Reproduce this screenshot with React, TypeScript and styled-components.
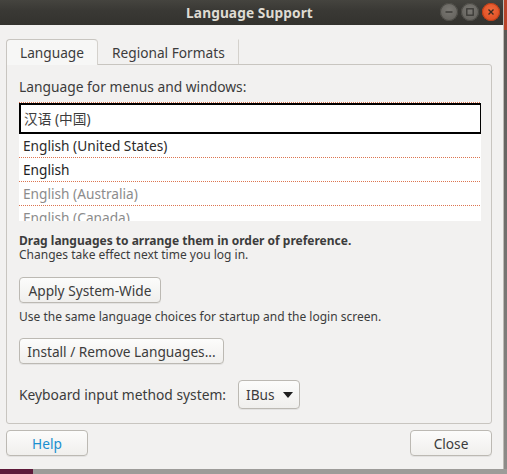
import styled, { createGlobalStyle } from "styled-components";

const GlobalStyle = createGlobalStyle`
  html, body {
    margin: 0;
    padding: 0;
    background: #9c9b98;
  }
  * {
    box-sizing: border-box;
  }
`;

const dots = "repeating-linear-gradient(to right, #dc7550 0 1px, transparent 1px 2px)";

const Desktop = styled.div`
  width: 507px;
  height: 474px;
  display: grid;
  grid-template-columns: 504px 3px;
  grid-template-rows: 469px 5px;
  font-family: "Noto Sans", "Noto Sans CJK SC", sans-serif;
  overflow: hidden;
`;

const EdgeRight = styled.div`
  background: linear-gradient(to bottom, #b8432a 0, #b8432a 30px, #5a5855 30px, #8d8c89 100%);
`;

const EdgeBottom = styled.div`
  grid-column: 1 / span 2;
  display: flex;
`;

const Wallpaper = styled.div<{ $tone: string; $w?: number }>`
  background: ${(p) => p.$tone};
  ${(p) => (p.$w ? `width: ${p.$w}px;` : "flex: 1;")}
`;

const Window = styled.div`
  display: flex;
  flex-direction: column;
  background: #f2f1f0;
  border-right: 1px solid #bdbab5;
`;

const TitleBar = styled.div`
  height: 25px;
  flex: none;
  background: linear-gradient(to bottom, #45443f, #3a3935 40%, #33322e);
  display: flex;
  align-items: center;
  justify-content: center;
  position: relative;
`;

const Title = styled.div`
  color: #dfdbd2;
  font-weight: bold;
  font-size: 13.7px;
  letter-spacing: 0.1px;
  margin-left: -4px;
`;

const Controls = styled.div`
  position: absolute;
  right: 3px;
  top: 3px;
  display: flex;
  gap: 3px;
`;

const Ctl = styled.div<{ $close?: boolean }>`
  width: 18px;
  height: 18px;
  border-radius: 50%;
  display: flex;
  align-items: center;
  justify-content: center;
  background: ${(p) =>
    p.$close
      ? "radial-gradient(circle at 50% 40%, #f16a3c, #d8461c)"
      : "radial-gradient(circle at 50% 40%, #7a7873, #5d5b56)"};
  box-shadow: inset 0 0 0 1px ${(p) => (p.$close ? "#b83d17" : "#4a4944")};
`;

const Body = styled.div`
  flex: 1;
  display: flex;
  flex-direction: column;
  padding: 13px 11px 0 6px;
`;

const Tabs = styled.div`
  display: flex;
  height: 26px;
  align-items: flex-end;
`;

const Tab = styled.div<{ $active?: boolean }>`
  height: ${(p) => (p.$active ? "26px" : "25px")};
  padding: 0 13px;
  display: flex;
  align-items: center;
  font-size: 13.7px;
  color: #3c3c3c;
  background: ${(p) => (p.$active ? "#f7f7f6" : "transparent")};
  border: 1px solid ${(p) => (p.$active ? "#c8c5c0" : "transparent")};
  border-bottom: none;
  border-right: 1px solid #d4d1cc;
  border-radius: ${(p) => (p.$active ? "4px 4px 0 0" : "0")};
  margin-bottom: ${(p) => (p.$active ? "-1px" : "0")};
  position: relative;
  z-index: ${(p) => (p.$active ? 1 : 0)};
`;

const Panel = styled.div`
  height: 360px;
  border: 1px solid #c8c5c0;
  border-radius: 0 3px 3px 3px;
  background: #f2f1f0;
  padding: 14px 12px 0 12px;
  display: flex;
  flex-direction: column;
`;

const Label = styled.div<{ $bold?: boolean; $small?: boolean }>`
  font-size: ${(p) => (p.$small ? 12 : 13.8)}px;
  font-weight: ${(p) => (p.$bold ? "bold" : "normal")};
  color: #3c3c3c;
  line-height: ${(p) => (p.$small ? 14 : 15)}px;
  white-space: nowrap;
`;

const List = styled.div`
  margin-top: 8px;
  height: 119px;
  overflow: hidden;
  width: 462px;
  padding-top: 1px;
  background: ${dots} top / 100% 1px no-repeat, #ffffff;
`;

const Row = styled.div<{ $tone: string; $selected?: boolean }>`
  height: ${(p) => (p.$selected ? "31px" : "24px")};
  padding: 0 0 2px ${(p) => (p.$selected ? "3px" : "4px")};
  display: flex;
  align-items: center;
  font-size: 13.7px;
  color: ${(p) => p.$tone};
  border: ${(p) => (p.$selected ? "2px solid #000" : "none")};
  width: ${(p) => (p.$selected ? "463px" : "100%")};
  background: ${(p) => (p.$selected ? "#ffffff" : `${dots} bottom / 100% 1px no-repeat`)};
  white-space: nowrap;
`;

const Hint = styled.div`
  margin-top: 13px;
  display: flex;
  flex-direction: column;
`;

const Button = styled.button<{ $blue?: boolean; $w?: number; $gap?: number }>`
  height: 26px;
  ${(p) => (p.$w ? `width: ${p.$w}px;` : "")}
  margin-top: ${(p) => p.$gap ?? 0}px;
  padding: 0 6px;
  font-family: inherit;
  font-size: 13.7px;
  color: ${(p) => (p.$blue ? "#1b8fd0" : "#3c3c3c")};
  background: linear-gradient(to bottom, #fcfcfb, #f0efed);
  border: 1px solid #bcb9b3;
  border-radius: 4px;
  box-shadow: 0 1px 0 rgba(0, 0, 0, 0.06);
  align-self: flex-start;
  white-space: nowrap;
`;

const Note = styled(Label)`
  margin-top: 7px;
`;

const Combo = styled(Button)`
  height: 29px;
  width: 62px;
  display: flex;
  align-items: center;
  justify-content: space-between;
  padding: 0 6px 0 7px;
  align-self: auto;
`;

const InputRow = styled.div`
  display: flex;
  align-items: center;
  gap: 12px;
  margin-top: 16px;
`;

const Footer = styled.div`
  display: flex;
  justify-content: space-between;
  margin-top: 6px;
`;

export default function App() {
  return (
    <>
      <GlobalStyle />
      <Desktop>
        <Window>
          <TitleBar>
            <Title>Language Support</Title>
            <Controls>
              <Ctl>
                <svg width="10" height="10" viewBox="0 0 10 10">
                  <line x1="1.5" y1="5" x2="8.5" y2="5" stroke="#3a3935" strokeWidth="1.4" />
                </svg>
              </Ctl>
              <Ctl>
                <svg width="10" height="10" viewBox="0 0 10 10">
                  <rect x="1.8" y="1.8" width="6.4" height="6.4" fill="none" stroke="#3a3935" strokeWidth="1.3" />
                </svg>
              </Ctl>
              <Ctl $close>
                <svg width="10" height="10" viewBox="0 0 10 10">
                  <path d="M2.5 2.5 L7.5 7.5 M7.5 2.5 L2.5 7.5" stroke="#3a2a20" strokeWidth="1.4" />
                </svg>
              </Ctl>
            </Controls>
          </TitleBar>
          <Body>
            <Tabs>
              <Tab $active>Language</Tab>
              <Tab>Regional Formats</Tab>
            </Tabs>
            <Panel>
              <Label>Language for menus and windows:</Label>
              <List>
                <Row $selected $tone="#3c3c3c">汉语 (中国)</Row>
                <Row $tone="#2b2b2b">English (United States)</Row>
                <Row $tone="#1e1e1e">English</Row>
                <Row $tone="#8c8c8c">English (Australia)</Row>
                <Row $tone="#8c8c8c">English (Canada)</Row>
              </List>
              <Hint>
                <Label $bold $small>Drag languages to arrange them in order of preference.</Label>
                <Label $small>Changes take effect next time you log in.</Label>
              </Hint>
              <Button $gap={15} $w={142}>Apply System-Wide</Button>
              <Note $small>Use the same language choices for startup and the login screen.</Note>
              <Button $gap={14} $w={205}>Install / Remove Languages...</Button>
              <InputRow>
                <Label>Keyboard input method system:</Label>
                <Combo>
                  IBus
                  <svg width="10" height="6" viewBox="0 0 10 6">
                    <path d="M0 0 L10 0 L5 6 Z" fill="#1e1e1e" />
                  </svg>
                </Combo>
              </InputRow>
            </Panel>
            <Footer>
              <Button $blue $w={82}>Help</Button>
              <Button $w={82}>Close</Button>
            </Footer>
          </Body>
        </Window>
        <EdgeRight />
        <EdgeBottom>
          <Wallpaper $tone="#5e1a3a" $w={33} />
          <Wallpaper $tone="#9d9c99" />
        </EdgeBottom>
      </Desktop>
    </>
  );
}
